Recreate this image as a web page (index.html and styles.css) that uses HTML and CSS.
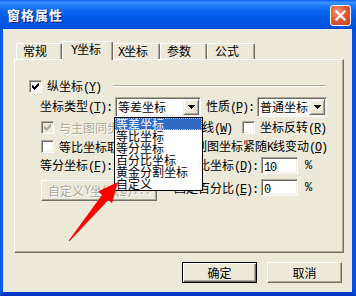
FILE: index.html
```html
<!DOCTYPE html>
<html lang="zh-CN">
<head>
<meta charset="utf-8">
<title>窗格属性</title>
<link rel="stylesheet" href="styles.css">
</head>
<body>
<div class="window">
  <div class="titlebar">
    <span class="title">窗格属性</span>
    <span class="close"><svg width="11" height="11" viewBox="0 0 11 11"><path d="M1.5 1.5L9.5 9.5M9.5 1.5L1.5 9.5" stroke="#fff" stroke-width="2.2" stroke-linecap="square"/></svg></span>
  </div>
  <div class="frame">
    <div class="client">
      <div class="tabs">
        <div class="tab t1">常规</div>
        <div class="tab t2 active"><span class="a">Y</span>坐标</div>
        <div class="tab t3"><span class="a">X</span>坐标</div>
        <div class="tab t4">参数</div>
        <div class="tab t5">公式</div>
      </div>
      <div class="panel">
        <div class="row r1">
          <span class="cb"><svg class="chk" width="7" height="7" viewBox="0 0 7 7"><path d="M0 2h1v3h-1zM1 3h1v3h-1zM2 4h1v3h-1zM3 3h1v3h-1zM4 2h1v3h-1zM5 1h1v3h-1zM6 0h1v3h-1z"/></svg></span>
          <span class="lbl">纵坐标<span class="a">(<u>Y</u>)</span></span>
          <span class="etch"></span>
        </div>
        <div class="row r2">
          <span class="lbl lw">坐标类型<span class="a">(<u>T</u>):</span></span>
          <span class="combo c1"><span class="val">等差坐标</span><span class="drop"><svg width="7" height="4" viewBox="0 0 7 4"><path d="M0 0h7v1h-7zM1 1h5v1h-5zM2 2h3v1h-3zM3 3h1v1h-1z"/></svg></span></span>
          <span class="lbl pw">性质<span class="a">(<u>P</u>):</span></span>
          <span class="combo c2"><span class="val">普通坐标</span><span class="drop"><svg width="7" height="4" viewBox="0 0 7 4"><path d="M0 0h7v1h-7zM1 1h5v1h-5zM2 2h3v1h-3zM3 3h1v1h-1z"/></svg></span></span>
        </div>
        <div class="row r3">
          <span class="item i95"><span class="cb off"><svg class="chk" width="7" height="7" viewBox="0 0 7 7"><path d="M0 2h1v3h-1zM1 3h1v3h-1zM2 4h1v3h-1zM3 3h1v3h-1zM4 2h1v3h-1zM5 1h1v3h-1zM6 0h1v3h-1z"/></svg></span><span class="lbl dis">与主图同步</span></span>
          <span class="item i106"><span class="cb"></span><span class="lbl">显示分隔线<span class="a">(<u>W</u>)</span></span></span>
          <span class="item"><span class="cb"></span><span class="lbl">坐标反转<span class="a">(<u>R</u>)</span></span></span>
        </div>
        <div class="row r4">
          <span class="item i136"><span class="cb"></span><span class="lbl">等比坐标取对数</span></span>
          <span class="item"><span class="cb"></span><span class="lbl">副图坐标紧随<span class="a">K</span>线变动<span class="a">(<u>O</u>)</span></span></span>
        </div>
        <div class="row r5">
          <span class="lbl lw">等分坐标<span class="a">(<u>F</u>):</span></span>
          <span class="tb hid"></span>
          <span class="rlabel">百分比坐标<span class="a">(<u>D</u>):</span></span>
          <span class="tb"><span class="a">10</span></span>
          <span class="pct a">%</span>
        </div>
        <div class="row r6">
          <span class="btn cust dis">自定义<span class="a">Y</span>坐标<span class="a">(<u>C</u>)...</span></span>
          <span class="rlabel">固定百分比<span class="a">(<u>E</u>):</span></span>
          <span class="tb"><span class="a">0</span></span>
          <span class="pct a">%</span>
        </div>
      </div>
      <div class="buttons">
        <span class="btn def">确定</span>
        <span class="btn">取消</span>
      </div>
    </div>
  </div>
  <div class="droplist">
    <div class="opt sel">等差坐标</div>
    <div class="opt">等比坐标</div>
    <div class="opt">等分坐标</div>
    <div class="opt">百分比坐标</div>
    <div class="opt">黄金分割坐标</div>
    <div class="opt">自定义</div>
  </div>
  <svg class="arrow" width="356" height="296" viewBox="0 0 356 296"><polygon points="118,182 98,191.5 102,195 68.6,240.7 69.4,241.3 108.4,200 112,203.3" fill="#ff0000"/></svg>
</div>
</body>
</html>
```
FILE: styles.css
```css
* { box-sizing: border-box; margin: 0; padding: 0; }
html, body { width: 356px; height: 296px; overflow: hidden; background: #ECE9D8; }
body {
  font-family: "Noto Sans CJK SC", "Liberation Sans", sans-serif;
  font-size: 12px;
  line-height: 12px;
  color: #000;
}
.a {
  font-family: "Liberation Mono", monospace;
  font-size: 12px;
  letter-spacing: -1.2px;
}
u { text-decoration: underline; text-underline-offset: 1px; }

.window { position: relative; width: 356px; height: 296px; display: flex; flex-direction: column; }

.titlebar {
  height: 29px; flex: none;
  display: flex; align-items: center; justify-content: space-between;
  padding: 0 5px 0 7px;
  background: linear-gradient(#0A5FEE 0%, #3D95FF 9%, #1E7AF7 20%, #0B64EE 40%, #0058E6 65%, #0454E2 88%, #0349D3 100%);
}
.title { color: #fff; font-weight: bold; font-size: 13px; letter-spacing: 1px; text-shadow: 1px 1px 0 #0A1E80; }
.close {
  width: 21px; height: 21px; margin-top: 1px;
  border: 1px solid #fff; border-radius: 3px;
  background: radial-gradient(circle at 35% 30%, #F09A7E 0%, #E05A38 45%, #C83C1B 100%);
  display: flex; align-items: center; justify-content: center;
}

.frame {
  flex: 1; display: flex;
  border-left: 3px solid #0C5CEC;
  border-right: 4px solid #0A4CDE;
  border-bottom: 4px solid #0838CB;
}
.client { flex: 1; background: #ECE9D8; padding: 12px 8px 0 11px; display: flex; flex-direction: column; }

.tabs { display: flex; height: 18px; padding-left: 2px; position: relative; z-index: 1; flex: none; }
.tab {
  height: 16px; margin-top: 2px;
  border-top: 1px solid #fff; border-left: 1px solid #fff; border-right: 1px solid #716F64;
  box-shadow: inset -1px 0 #ACA899;
  border-radius: 2px 2px 0 0;
  padding: 1px 0 0 6px;
  background: #ECE9D8;
  white-space: nowrap;
}
.t1 { width: 46px; }
.t2 { width: 51px; }
.t3 { width: 47px; padding-left: 4px; }
.t4 { width: 47px; }
.t5 { width: 48px; padding-left: 7px; }
.tab.active { height: 19px; margin-top: 0; padding-left: 8px; }

.panel {
  width: 330px; height: 194px; flex: none;
  border-top: 1px solid #fff; border-left: 1px solid #fff;
  border-right: 1px solid #716F64; border-bottom: 1px solid #716F64;
  box-shadow: inset -1px -1px #ACA899;
  padding-top: 19px;
  display: flex; flex-direction: column;
}

.row { display: flex; align-items: center; flex: none; white-space: nowrap; }
.r1 { height: 15px; padding-left: 14px; }
.r2 { height: 20px; margin-top: 3px; padding-left: 25px; }
.r3 { height: 13px; margin-top: 4px; padding-left: 26px; }
.r4 { height: 13px; margin-top: 6px; padding-left: 26px; }
.r5 { height: 17px; margin-top: 4px; padding-left: 25px; padding-right: 32px; }
.r6 { height: 22px; margin-top: 5px; padding-left: 26px; padding-right: 32px; align-items: flex-start; }

.cb {
  width: 13px; height: 13px; flex: none;
  background: #fff;
  border-top: 1px solid #ACA899; border-left: 1px solid #ACA899;
  border-right: 1px solid #fff; border-bottom: 1px solid #fff;
  box-shadow: inset 1px 1px #716F64, inset -1px -1px #F1EFE2;
  display: flex; align-items: center; justify-content: center;
}
.cb.off { background: #ECE9D8; }
.chk { fill: #000; display: block; }
.cb.off .chk { fill: #ACA899; }
.r1 .lbl { margin-left: 5px; }
.item { display: flex; align-items: center; gap: 5px; flex: none; }
.i95 { width: 95px; }
.i106 { width: 106px; }
.i136 { width: 136px; }
.dis { color: #ACA899; text-shadow: 1px 1px 0 #fff; }

.etch {
  flex: 1; height: 2px; align-self: flex-start; margin: 6px 17px 0 12px;
  border-top: 1px solid #ACA899; border-bottom: 1px solid #fff;
}

.lw { width: 75px; flex: none; }
.pw { width: 51px; margin-left: 5px; flex: none; }

.combo {
  height: 20px; display: flex; flex: none;
  background: #fff; padding: 1px;
  border-top: 1px solid #ACA899; border-left: 1px solid #ACA899;
  border-right: 1px solid #fff; border-bottom: 1px solid #fff;
  box-shadow: inset 1px 1px #716F64, inset -1px -1px #F1EFE2;
}
.c1 { width: 86px; }
.c2 { width: 70px; }
.combo .val { flex: 1; padding-left: 1px; line-height: 16px; overflow: hidden; white-space: nowrap; }
.drop {
  width: 16px; height: 16px; flex: none;
  background: #ECE9D8;
  border-top: 1px solid #F1EFE2; border-left: 1px solid #F1EFE2;
  border-right: 1px solid #716F64; border-bottom: 1px solid #716F64;
  box-shadow: inset 1px 1px #fff, inset -1px -1px #ACA899;
  display: flex; align-items: center; justify-content: center;
}
.drop svg { display: block; fill: #000; }

.tb {
  width: 37px; height: 17px; flex: none;
  background: #fff; padding: 1px 0 0 2px; line-height: 14px;
  border-top: 1px solid #ACA899; border-left: 1px solid #ACA899;
  border-right: 1px solid #fff; border-bottom: 1px solid #fff;
  box-shadow: inset 1px 1px #716F64, inset -1px -1px #F1EFE2;
}
.tb.hid { width: 45px; margin-left: 0; }
.rlabel { flex: 1; text-align: right; padding-right: 3px; }
.r6 .rlabel { margin-top: 3px; }
.pct { margin-left: 7px; flex: none; }
.r6 .pct { margin-top: 3px; }

.btn {
  width: 75px; height: 21px; flex: none;
  display: flex; align-items: center; justify-content: center;
  background: #ECE9D8;
  border-top: 1px solid #fff; border-left: 1px solid #fff;
  border-right: 1px solid #716F64; border-bottom: 1px solid #716F64;
  box-shadow: inset -1px -1px #ACA899;
}
.btn.def {
  border: 1px solid #000;
  box-shadow: inset 1px 1px #fff, inset -1px -1px #716F64, inset -2px -2px #ACA899;
}
.btn.cust { width: 116px; margin-top: 1px; }

.buttons { display: flex; justify-content: flex-end; gap: 10px; margin-top: 9px; padding-right: 2px; flex: none; }

.droplist {
  position: absolute; left: 114px; top: 117px;
  width: 89px; height: 74px;
  background: #fff; border: 1px solid #000;
  z-index: 5;
}
.opt { height: 12px; line-height: 12px; padding-left: 1px; white-space: nowrap; }
.opt.sel { background: #316AC5; color: #fff; outline: 1px dotted #E6C35C; outline-offset: -1px; }

.arrow { position: absolute; left: 0; top: 0; z-index: 6; pointer-events: none; }
```
